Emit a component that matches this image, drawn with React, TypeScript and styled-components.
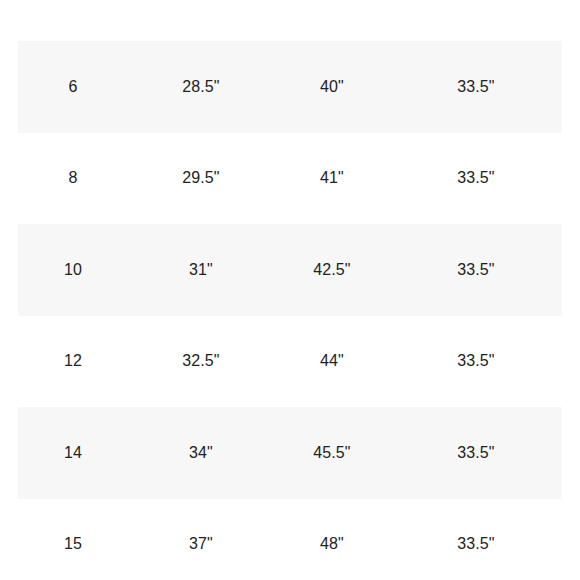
import React from "react";
import styled, { createGlobalStyle } from "styled-components";

const Global = createGlobalStyle`
  html, body { margin: 0; padding: 0; background: #ffffff; }
  body { font-family: "Liberation Sans", Arial, Helvetica, sans-serif; }
`;

const Viewport = styled.div`
  width: 580px;
  height: 580px;
  overflow: hidden;
  background: #ffffff;
`;

const Table = styled.div`
  margin: -50.5px 18px 0 18px;
  display: flex;
  flex-direction: column;
`;

const Row = styled.div<{ $shaded: boolean }>`
  display: grid;
  grid-template-columns: 110px 146px 116px 172px;
  height: 91.5px;
  align-items: center;
  background: ${(p) => (p.$shaded ? "#f7f7f7" : "#ffffff")};
`;

const Cell = styled.div`
  text-align: center;
  font-size: 16px;
  color: #222222;
  letter-spacing: 0.1px;
`;

const rows: string[][] = [
  ["4", '27"', '39"', '33.5"'],
  ["6", '28.5"', '40"', '33.5"'],
  ["8", '29.5"', '41"', '33.5"'],
  ["10", '31"', '42.5"', '33.5"'],
  ["12", '32.5"', '44"', '33.5"'],
  ["14", '34"', '45.5"', '33.5"'],
  ["15", '37"', '48"', '33.5"'],
];

export default function App() {
  return (
    <>
      <Global />
      <Viewport>
        <Table>
          {rows.map((r, i) => (
            <Row key={i} $shaded={i % 2 === 1}>
              {r.map((c, j) => (
                <Cell key={j}>{c}</Cell>
              ))}
            </Row>
          ))}
        </Table>
      </Viewport>
    </>
  );
}
